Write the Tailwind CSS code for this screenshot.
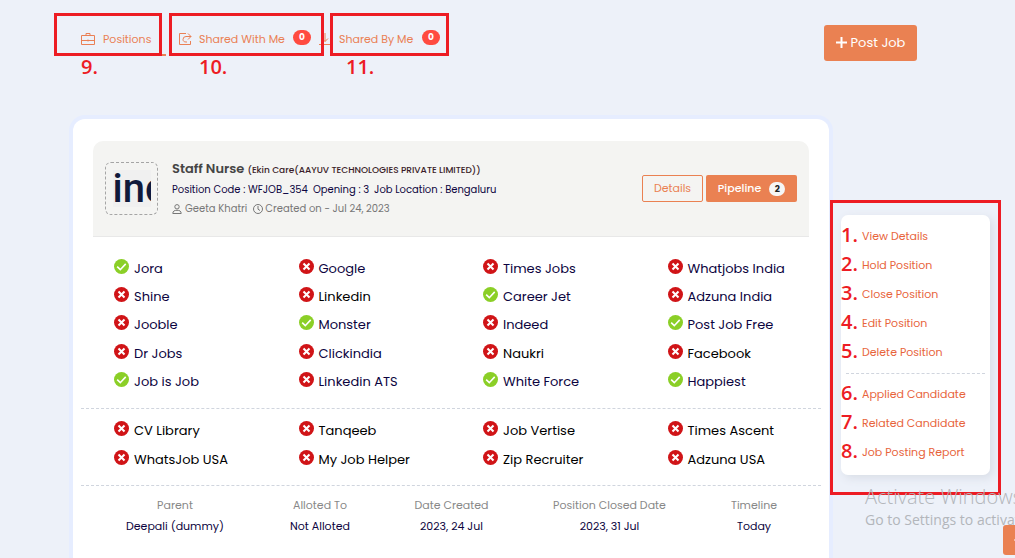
<!DOCTYPE html>
<html lang="en">
<head>
<meta charset="utf-8">
<meta name="viewport" content="width=device-width, initial-scale=1">
<title>Positions</title>
<script src="https://cdn.jsdelivr.net/npm/@tailwindcss/browser@4"></script>
</head>
<body class="bg-[#edf1f9] font-['Poppins','Inter',sans-serif] text-[#0c0440]">
<svg class="hidden" aria-hidden="true">
  <symbol id="yes" viewBox="0 0 16 16"><circle cx="8" cy="8" r="8" fill="#8bcf27"/><path d="M3.4 8.2 6.700 11.400 12.500 5.200" fill="none" stroke="#fff" stroke-width="1.7"/></symbol>
  <symbol id="no" viewBox="0 0 16 16"><circle cx="8" cy="8" r="8" fill="#d01417"/><path d="M4.800 4.800 11.200 11.200M11.200 4.800 4.800 11.200" fill="none" stroke="#fff" stroke-width="2.200"/></symbol>
</svg>

<div class="relative flex min-h-screen flex-col overflow-hidden">
  <header class="flex h-[119px] items-start justify-between pr-[98px] pl-[66px]">
    <nav class="relative flex h-14 pt-[22px] text-[11px] leading-8 text-[#ea8055]">
      <a href="#positions" class="flex w-[100px] items-center gap-2 border-b-2 border-[#ea8055] pt-[2px] pl-[15px]">
        <svg class="size-[14px] shrink-0" viewBox="0 0 14 14" fill="none" stroke="currentColor"><path d="M.5 3.5h13v9H.5zM.5 8.5h13M5 3V1.5h4V3M7 7.5v2"/></svg>
        Positions
      </a>
      <a href="#shared-with-me" class="flex items-center gap-[7px] pl-3">
        <svg class="size-[14px] shrink-0" viewBox="0 0 14 14" fill="none" stroke="currentColor"><path d="M8 1.500H1.500v11h11V9M10 1.500 13 4.500 10 7.500M13 4.500H8A3 3 0 0 0 5 7.500C5 9 6 10 8 10H9"/></svg>
        <span class="w-[88px] whitespace-nowrap">Shared With Me</span>
        <span class="-mt-1 -ml-[1px] h-[15px] w-[18px] rounded-full bg-[#ff4b40] text-center text-[9px] leading-[15px] font-bold text-white">0</span>
      </a>
      <a href="#shared-by-me" class="flex items-center gap-[7px] pl-[7px]">
        <svg class="size-[14px] shrink-0" viewBox="0 0 14 14" fill="none" stroke="currentColor"><path d="M7 1v8.500M4 6.500l3 3 3-3M1 12.500h12"/></svg>
        <span class="w-[77px] whitespace-nowrap">Shared By Me</span>
        <span class="-mt-1 -ml-[1px] h-[15px] w-[18px] rounded-full bg-[#ff4b40] text-center text-[9px] leading-[15px] font-bold text-white">0</span>
      </a>
    </nav>
    <button class="mt-[25px] flex h-9 w-[93px] items-center justify-center gap-1 rounded-[3px] bg-[#ea8152] text-[13px] whitespace-nowrap text-white">
      <svg class="mb-px size-[11px] shrink-0" viewBox="0 0 11 11" stroke="currentColor" stroke-width="2"><path d="M5.500 0v11M0 5.500h11"/></svg>
      Post Job
    </button>
  </header>

  <div class="flex flex-1 items-stretch gap-3 pr-[25px] pl-[73px]">
    <main class="min-w-0 flex-1 rounded-t-xl bg-white px-2 pt-[22px] pb-4 shadow-[0_0_0_4px_#e6edff]">
      <section class="mx-3 flex h-24 items-center rounded-t-[10px] border-b border-[#e8e8e8] bg-[#f4f4f2] px-3">
        <div class="flex size-[53px] shrink-0 items-center justify-center rounded-md border border-dashed border-[#a5a5a5]">
          <div class="h-[37px] w-[38px] overflow-hidden bg-[#f0f0f0] font-['Roboto',sans-serif] text-[40px] leading-[37px] font-medium text-[#101a3c]">ind</div>
        </div>
        <div class="ml-[14px] flex-1 whitespace-nowrap">
          <h1 class="text-[13px] leading-5 font-semibold text-[#454545]">Staff Nurse <span class="text-[9px] font-medium text-[#3a1c28]">(Ekin Care(AAYUV TECHNOLOGIES PRIVATE LIMITED))</span></h1>
          <p class="flex gap-[5px] text-[10px] leading-5"><span>Position Code : WFJOB_354</span><span>Opening : 3</span><span>Job Location : Bengaluru</span></p>
          <p class="flex items-center text-[10px] leading-[18px] text-[#777]">
            <svg class="mr-[3px] size-[10px]" viewBox="0 0 10 10" fill="none" stroke="currentColor"><circle cx="5" cy="2.800" r="2.200"/><path d="M.8 9.500C.8 7 2.500 6.300 5 6.300S9.200 7 9.200 9.500z"/></svg>Geeta Khatri
            <svg class="mr-[2px] ml-[6px] size-[10px]" viewBox="0 0 10 10" fill="none" stroke="currentColor"><circle cx="5" cy="5" r="4.500"/><path d="M5 2v3.200L7 6.500"/></svg>Created on - Jul 24, 2023
          </p>
        </div>
        <div class="flex gap-[3px] text-[11px]">
          <button class="h-[27px] w-[61px] rounded-[2px] border border-[#ea8152] text-[#ea8152]">Details</button>
          <button class="flex h-[27px] w-[91px] items-center justify-center gap-2 rounded-[2px] bg-[#ea8152] font-medium text-white">Pipeline <span class="h-[14px] w-4 rounded-full bg-[#f6f6f6] text-[9px] leading-[14px] font-bold text-[#222]">2</span></button>
        </div>
      </section>

      <ul class="grid h-[172px] grid-flow-col grid-cols-4 grid-rows-5 border-b border-dashed border-[#d0d5de] pt-4 pr-[2px] pb-[13px] text-[13px] leading-5 whitespace-nowrap *:flex *:items-center *:gap-[5px] *:pl-[33px] [&_span]:pt-[3px] [&_svg]:mb-[2px] [&_svg]:size-[15px] [&_svg]:shrink-0">
        <li><svg><use href="#yes"/></svg><span>Jora</span></li>
        <li><svg><use href="#no"/></svg><span>Shine</span></li>
        <li><svg><use href="#no"/></svg><span>Jooble</span></li>
        <li><svg><use href="#no"/></svg><span>Dr Jobs</span></li>
        <li><svg><use href="#yes"/></svg><span>Job is Job</span></li>
        <li><svg><use href="#no"/></svg><span>Google</span></li>
        <li class="text-black"><svg><use href="#no"/></svg><span>Linkedin</span></li>
        <li><svg><use href="#yes"/></svg><span>Monster</span></li>
        <li><svg><use href="#no"/></svg><span>Clickindia</span></li>
        <li><svg><use href="#no"/></svg><span>Linkedin ATS</span></li>
        <li><svg><use href="#no"/></svg><span>Times Jobs</span></li>
        <li><svg><use href="#yes"/></svg><span>Career Jet</span></li>
        <li><svg><use href="#no"/></svg><span>Indeed</span></li>
        <li class="text-black"><svg><use href="#no"/></svg><span>Naukri</span></li>
        <li><svg><use href="#yes"/></svg><span>White Force</span></li>
        <li><svg><use href="#no"/></svg><span>Whatjobs India</span></li>
        <li><svg><use href="#no"/></svg><span>Adzuna India</span></li>
        <li><svg><use href="#yes"/></svg><span>Post Job Free</span></li>
        <li class="text-black"><svg><use href="#no"/></svg><span>Facebook</span></li>
        <li><svg><use href="#yes"/></svg><span>Happiest</span></li>
      </ul>
      <ul class="grid h-[77px] grid-flow-col grid-cols-4 grid-rows-2 border-b border-dashed border-[#d0d5de] pt-[6px] pr-[2px] pb-[12px] text-[13px] leading-5 whitespace-nowrap text-black *:flex *:items-center *:gap-[5px] *:pl-[33px] [&_span]:pt-[3px] [&_svg]:mb-[2px] [&_svg]:size-[15px] [&_svg]:shrink-0">
        <li><svg><use href="#no"/></svg><span>CV Library</span></li>
        <li><svg><use href="#no"/></svg><span>WhatsJob USA</span></li>
        <li><svg><use href="#no"/></svg><span>Tanqeeb</span></li>
        <li><svg><use href="#no"/></svg><span>My Job Helper</span></li>
        <li><svg><use href="#no"/></svg><span>Job Vertise</span></li>
        <li><svg><use href="#no"/></svg><span>Zip Recruiter</span></li>
        <li><svg><use href="#no"/></svg><span>Times Ascent</span></li>
        <li><svg><use href="#no"/></svg><span>Adzuna USA</span></li>
      </ul>
      <dl class="grid grid-cols-[188fr_102fr_161fr_155fr_134fr] pt-[9px] text-center text-[11px] leading-[21px] whitespace-nowrap [&_dt]:text-[#888]">
        <div><dt>Parent</dt><dd>Deepali (dummy)</dd></div>
        <div><dt>Alloted To</dt><dd>Not Alloted</dd></div>
        <div><dt>Date Created</dt><dd>2023, 24 Jul</dd></div>
        <div><dt>Position Closed Date</dt><dd>2023, 31 Jul</dd></div>
        <div><dt>Timeline</dt><dd>Today</dd></div>
      </dl>
    </main>

    <aside class="relative mt-24 w-[149px] shrink-0 self-start rounded-[7px] bg-white pt-[7px] pb-2 shadow-[3px_3px_10px_#d8dde6]">
      <ul class="text-[11px] leading-[29px] whitespace-nowrap text-[#e8643c] *:flex *:items-center [&_b]:w-[21px] [&_b]:pb-1 [&_b]:font-['Open_Sans',sans-serif] [&_b]:text-[20px] [&_b]:leading-[25px] [&_b]:font-semibold [&_b]:text-[#ed1c24]">
        <li><b>1.</b><a href="#view">View Details</a></li>
        <li><b>2.</b><a href="#hold">Hold Position</a></li>
        <li><b>3.</b><a href="#close">Close Position</a></li>
        <li><b>4.</b><a href="#edit">Edit Position</a></li>
        <li><b>5.</b><a href="#delete">Delete Position</a></li>
        <li class="mx-[5px] mt-[6px] mb-[6px] border-t border-dashed border-[#d0d5de]" role="separator"></li>
        <li><b>6.</b><a href="#applied">Applied Candidate</a></li>
        <li><b>7.</b><a href="#related">Related Candidate</a></li>
        <li><b>8.</b><a href="#report">Job Posting Report</a></li>
      </ul>
      <div class="pointer-events-none absolute -inset-x-[11px] -top-[15px] -bottom-5 border-3 border-[#ed1c24]"></div>
    </aside>
  </div>

  <!-- Numbered callouts over the tabs -->
  <div class="pointer-events-none absolute inset-0 font-['Open_Sans',sans-serif] text-[20px] leading-6 font-semibold text-[#ed1c24]">
    <div class="absolute top-[13px] left-[54px] h-[43px] w-[108px] border-3 border-[#ed1c24]"></div>
    <div class="absolute top-[13px] left-[169px] h-[43px] w-[155px] border-3 border-[#ed1c24]"></div>
    <div class="absolute top-[13px] left-[330px] h-[43px] w-[119px] border-3 border-[#ed1c24]"></div>
    <span class="absolute top-[55px] left-[81px]">9.</span>
    <span class="absolute top-[55px] left-[199px]">10.</span>
    <span class="absolute top-[55px] left-[346px]">11.</span>
  </div>

  <!-- System watermark and floating action -->
  <div class="pointer-events-none absolute top-[485px] left-[865px] font-['Open_Sans',sans-serif] whitespace-nowrap text-[#b3b6bb]">
    <p class="text-[20px] leading-6 font-light">Activate Windows</p>
    <p class="text-[14px] leading-[22px]">Go to Settings to activate Windows.</p>
  </div>
  <button aria-label="Add" class="absolute top-[525px] -right-[18px] flex h-[30px] w-[30px] items-center justify-center rounded-[3px] bg-[#ea8152] text-white">
    <svg class="size-2" viewBox="0 0 8 8" stroke="currentColor"><path d="M4 0v8M0 4h8"/></svg>
  </button>
</div>
</body>
</html>
